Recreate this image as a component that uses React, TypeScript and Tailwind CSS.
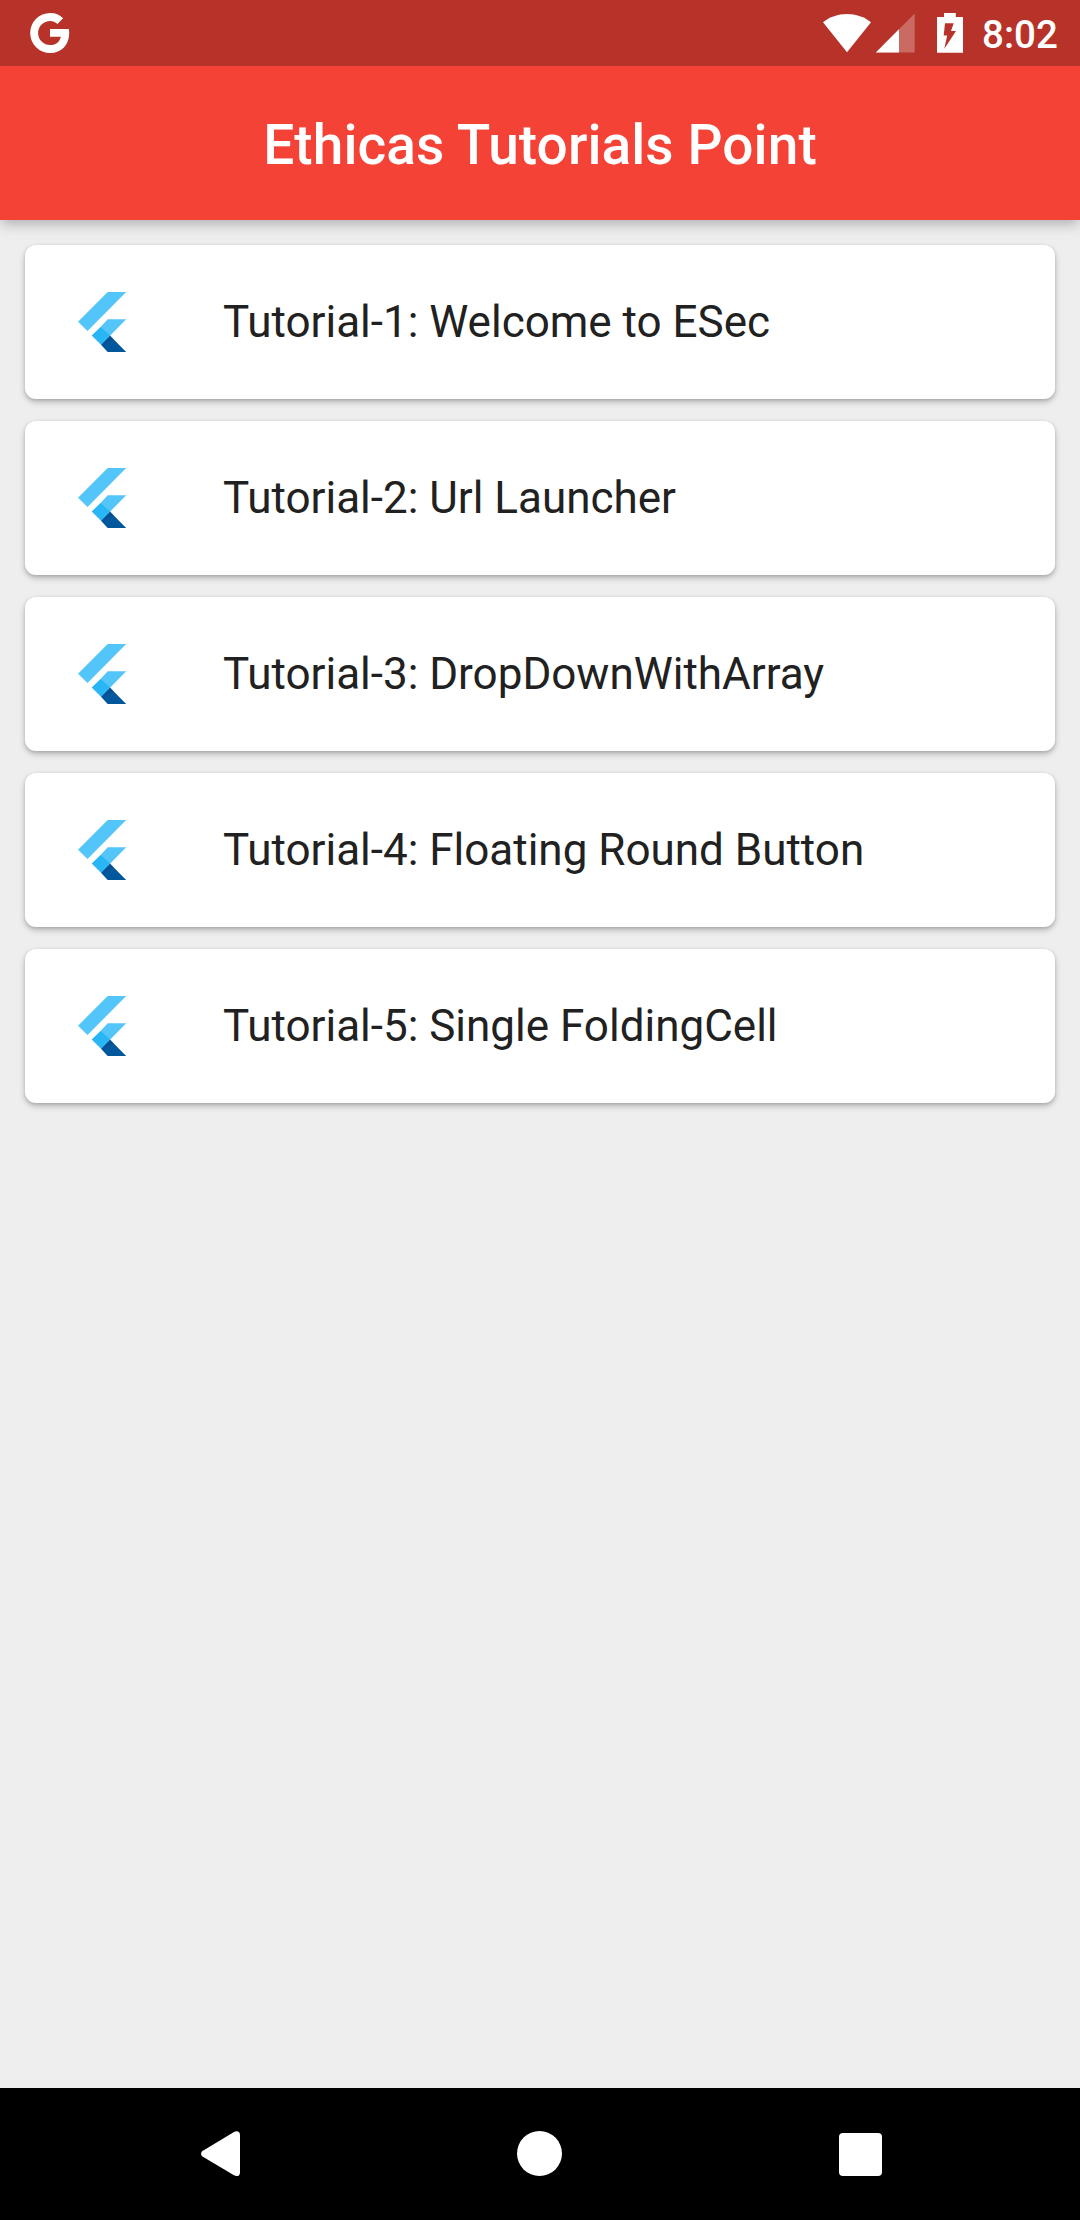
const tutorials = [
  "Tutorial-1: Welcome to ESec",
  "Tutorial-2: Url Launcher",
  "Tutorial-3: DropDownWithArray",
  "Tutorial-4: Floating Round Button",
  "Tutorial-5: Single FoldingCell",
];

function GoogleIcon() {
  return (
    <svg width="40" height="42" viewBox="30 12 40 42" fill="white">
      <path d="M50 29H68.8C69.1 30.3 69.2 31.6 69.2 33C69.2 45 61.5 53 50.2 53A20 20 0 0 1 50.2 13C55.4 13 59.8 14.9 63.1 18.2L57.4 23.9C55.4 22 53 20.9 50.2 20.9A12.1 12.1 0 0 0 50.2 45.1C56.4 45.1 59.9 41.4 60.8 36.8H50Z" />
    </svg>
  );
}

function WifiIcon() {
  return (
    <svg width="50" height="42" viewBox="822 12 50 42" fill="white">
      <path d="M823 22.3C829.5 17 838 14 847 14S864.5 17 871 22.3L847 52.3Z" />
    </svg>
  );
}

function SignalIcon() {
  return (
    <svg width="40" height="42" viewBox="875 12 40 42" fill="white">
      <path d="M914.7 13.5V52.6H875.8Z" opacity=".27" />
      <path d="M899 29.3V52.6H875.8Z" />
    </svg>
  );
}

function BatteryIcon() {
  return (
    <svg width="28" height="42" viewBox="936 12 28 42" fill="white">
      <path
        fillRule="evenodd"
        d="M944 13H955.8V17H963V52.7H937V17H944ZM945 23.3L943.7 35.5H947.2L944.3 48.7L956 31H951L953.7 23.3Z"
      />
    </svg>
  );
}

function FlutterIcon() {
  return (
    <svg width="49" height="61" viewBox="78 292 49 61">
      <path fill="#54c5f8" d="M107.7 292H126.2L87.5 331L78 321.7Z" />
      <path fill="#54c5f8" d="M107.7 319.3H126.2L110 335.7L101 326.4Z" />
      <path fill="#01579b" d="M110 335.7L126.2 352H107.7L101 344.8Z" />
      <path fill="#29b6f6" d="M101 326.4L110.2 335.6L101 344.8L91.7 335.6Z" />
      <path fill="#084a8c" d="M110.2 335.6L113.8 339.6L101 344.8Z" opacity=".6" />
    </svg>
  );
}

function StatusBar() {
  return (
    <header className="relative z-10 flex h-[66px] shrink-0 items-center bg-[#b7332a] pl-[30px] pr-[22px]">
      <GoogleIcon />
      <div className="ml-auto flex items-center">
        <WifiIcon />
        <div className="ml-[3px] flex"><SignalIcon /></div>
        <div className="ml-[21px] flex"><BatteryIcon /></div>
        <span className="ml-[18px] mt-[3px] w-[76px] whitespace-nowrap text-[38.5px] font-medium leading-[44px]">
          8:02
        </span>
      </div>
    </header>
  );
}

function NavigationBar() {
  return (
    <nav className="flex h-[132px] shrink-0 items-center bg-black pl-[201px] pr-[198px]">
      <svg width="40" height="46" viewBox="0 0 40 46" fill="white">
        <path d="M33 1.1C36 -.6 39 .5 39 4V41.5C39 45 36 46 33 44.3L1.9 25.8C-.5 24.4-.5 21.2 1.9 19.8Z" />
      </svg>
      <div className="mb-px ml-[276px] size-[45px] rounded-full bg-white" />
      <div className="ml-auto mt-px size-[43px] rounded-[4px] bg-white" />
    </nav>
  );
}

export default function App() {
  return (
    <div className="flex h-[2220px] w-[1080px] flex-col overflow-hidden bg-[#eeeeee] font-['Roboto',sans-serif] text-white">
      <StatusBar />
      <div className="flex h-[154px] shrink-0 items-center justify-center bg-[#f44336] shadow-[0_5px_11px_-2px_rgba(0,0,0,0.2),0_8px_14px_rgba(0,0,0,0.07)]">
        <h1 className="mt-[3px] whitespace-nowrap text-[55px] font-medium leading-[64px] tracking-[0.08px]">
          Ethicas Tutorials Point
        </h1>
      </div>
      <main className="flex flex-1 flex-col gap-[22px] px-[25px] pt-[25px]">
        {tutorials.map((title) => (
          <article
            key={title}
            className="flex h-[154px] items-center rounded-[11px] bg-white pl-[53px] shadow-[0_3px_6px_rgba(0,0,0,0.24),0_1px_3px_rgba(0,0,0,0.12)]"
          >
            <FlutterIcon />
            <span className="ml-[96px] whitespace-nowrap text-[44px] leading-[52px] text-[#212121]">
              {title}
            </span>
          </article>
        ))}
      </main>
      <NavigationBar />
    </div>
  );
}
